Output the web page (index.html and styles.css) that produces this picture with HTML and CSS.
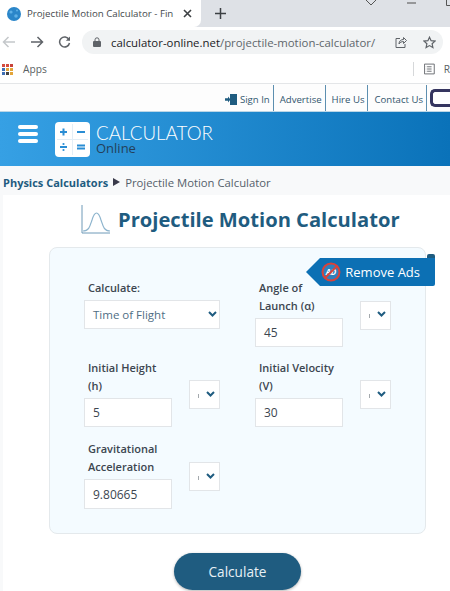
FILE: index.html
```html
<!DOCTYPE html>
<html lang="en">

<head>
    <meta charset="UTF-8">
    <meta name="viewport" content="width=device-width, initial-scale=1.0">
    <title>Projectile Motion Calculator</title>
    <link rel="stylesheet" href="styles.css">
</head>

<body>
    <!-- browser -->
    <div class="tabStrip">
        <div class="tab">
            <svg class="favicon" width="14" height="14" viewBox="0 0 14 14">
                <circle cx="7" cy="7" r="7" fill="#2b86c9" />
                <circle cx="4" cy="5" r="1.6" fill="#5fb0e6" />
                <circle cx="9" cy="9" r="1.8" fill="#5fb0e6" />
                <circle cx="10" cy="3.5" r="1" fill="#5fb0e6" />
            </svg>
            <span class="tabTitle">Projectile Motion Calculator - Fin</span>
            <svg class="tabClose" width="9" height="9" viewBox="0 0 9 9">
                <path d="M1 1l7 7M8 1l-7 7" stroke="#3c4043" stroke-width="1.6" />
            </svg>
        </div>
        <svg class="newTab" width="11" height="11" viewBox="0 0 11 11">
            <path d="M5.5 0v11M0 5.5h11" stroke="#3c4043" stroke-width="1.5" />
        </svg>
        <div class="winBtns">
            <svg width="12" height="6" viewBox="0 0 12 6">
                <path d="M1 0l5 5 5-5" fill="none" stroke="#555" stroke-width="1" />
            </svg>
            <svg width="9" height="6" viewBox="0 0 9 6">
                <path d="M0 3h9" stroke="#666" stroke-width="1.2" />
            </svg>
            <svg width="9" height="6" viewBox="0 0 9 6">
                <path d="M.5 0v5.5h8.500V0" fill="none" stroke="#555" stroke-width="1" />
            </svg>
        </div>
    </div>

    <div class="toolbar">
        <svg width="14" height="12" viewBox="0 0 14 12">
            <path d="M13 6H2M6.500 1L1.500 6l5 5" fill="none" stroke="#c4c7ca" stroke-width="1.500" />
        </svg>
        <svg width="14" height="12" viewBox="0 0 14 12">
            <path d="M1 6h11M7.500 1l5 5-5 5" fill="none" stroke="#5f6368" stroke-width="1.500" />
        </svg>
        <svg width="13" height="13" viewBox="0 0 13 13">
            <path d="M11 3.600A5 5 0 1 0 11.500 7" fill="none" stroke="#5f6368" stroke-width="1.500" />
            <path d="M12 .5v4.200H7.800z" fill="#5f6368" />
        </svg>
        <div class="omnibox">
            <svg width="8" height="10" viewBox="0 0 8 10">
                <path d="M2 4V2.800a2 2 0 0 1 4 0V4" fill="none" stroke="#5f6368" stroke-width="1" />
                <rect y="4" width="8" height="6" rx="1" fill="#5f6368" />
            </svg>
            <span class="url"><b>calculator-online.net</b>/projectile-motion-calculator/</span>
            <svg class="share" width="12" height="12" viewBox="0 0 12 12">
                <path d="M5 2.500H1v9h9V8M4 8c0-3 2-4.500 4.500-4.500V1.500L11.500 4.500 8.500 7.500V5.500C6.500 5.500 5 6.500 4 8z" fill="none" stroke="#5f6368" stroke-width="1" />
            </svg>
            <svg class="star" width="13" height="13" viewBox="0 0 13 13">
                <path d="M6.500 1.200l1.600 3.500 3.800.4-2.800 2.600.8 3.800-3.400-1.900-3.400 1.900.8-3.800L1.100 5.100l3.800-.4z" fill="none" stroke="#5f6368" stroke-width="1.200" />
            </svg>
        </div>
    </div>

    <div class="bookmarks">
        <div class="appsGrid">
            <i class="c1"></i><i class="c2"></i><i class="c3"></i>
            <i class="c4"></i><i class="c5"></i><i class="c6"></i>
            <i class="c7"></i><i class="c8"></i><i class="c9"></i>
        </div>
        <span class="apps">Apps</span>
        <div class="bmRight">
            <svg width="12" height="12" viewBox="0 0 12 12">
                <path d="M.5.500h11v11H.500zM3.500 3.500h5M3.500 6h5M3.500 8.500h5M2 3.500h.5M2 6h.5M2 8.500h.5" fill="none" stroke="#5f6368" stroke-width="1" />
            </svg>
            <span class="apps">R</span>
        </div>
    </div>

    <!-- page -->
    <div class="topLinks">
        <a href="#" class="signIn">
            <svg width="12" height="11" viewBox="0 0 12 11">
                <path d="M5 0h7v11H5zM0 4.200h3V2.500L5.500 5.500 3 8.500V6.800H0z" fill="#1f5c80" />
            </svg>
            Sign In
        </a>
        <a href="#">Advertise</a>
        <a href="#">Hire Us</a>
        <a href="#">Contact Us</a>
        <span class="themeBox"></span>
    </div>

    <header class="siteHeader">
        <div class="burger"><span></span><span></span><span></span></div>
        <svg class="logoBox" width="35" height="35" viewBox="0 0 35 35">
            <rect width="35" height="35" rx="4" fill="#fff" />
            <path d="M17.500 2v31M2 17.500h31" stroke="#e3eef6" stroke-width="1" />
            <path d="M8.500 6.500v7M5 10h7M22 10h8M5 25h7M22 23.500h8M22 26.500h8" stroke="#2a8dd4" stroke-width="2" />
            <circle cx="8.500" cy="22" r="1.100" fill="#2a8dd4" />
            <circle cx="8.500" cy="28" r="1.100" fill="#2a8dd4" />
        </svg>
        <div class="logoText">
            <div class="logoTop">CALCULATOR</div>
            <div class="logoSub">Online</div>
        </div>
    </header>

    <div class="crumbs">
        <a href="#">Physics Calculators</a>
        <span class="crumbArrow"></span>
        <span>Projectile Motion Calculator</span>
    </div>

    <main class="main">
        <div class="titleRow">
            <svg width="29" height="29" viewBox="0 0 29 29">
                <path d="M1 0v28h28" fill="none" stroke="#6f9ab8" stroke-width="1" />
                <path d="M2 26c6 0 7-5 9-11 1.500-5 3-7 4.500-7s3 2 4.500 7c2 6 3 11 9 11" fill="none" stroke="#8db4cd" stroke-width="1.200" />
            </svg>
            <h1>Projectile Motion Calculator</h1>
        </div>

        <div class="card">
            <div class="removeAds">
                <svg width="20" height="20" viewBox="0 0 20 20">
                    <circle cx="10" cy="10" r="8.500" fill="#2f80bd" stroke="#d9423a" stroke-width="2" />
                    <text x="10" y="13" class="adMark">AD</text>
                    <path d="M4 16L16 4" stroke="#d9423a" stroke-width="2" />
                </svg>
                Remove Ads
            </div>

            <div class="formGrid">
                <div class="field">
                    <div class="fieldMain">
                        <label>Calculate:</label>
                        <div class="selectBox wide">Time of Flight<svg class="chev" width="9" height="6" viewBox="0 0 9 6"><path d="M1 1l3.500 3.500L8 1" fill="none" stroke="#1f5c80" stroke-width="2" /></svg></div>
                    </div>
                </div>

                <div class="field">
                    <div class="fieldMain">
                        <label>Angle of<br>Launch (α)</label>
                        <div class="inputBox">45</div>
                    </div>
                    <div class="selectBox unit"><i></i><svg class="chev" width="9" height="6" viewBox="0 0 9 6"><path d="M1 1l3.500 3.500L8 1" fill="none" stroke="#1f5c80" stroke-width="2" /></svg></div>
                </div>

                <div class="field">
                    <div class="fieldMain">
                        <label>Initial Height<br>(h)</label>
                        <div class="inputBox">5</div>
                    </div>
                    <div class="selectBox unit"><i></i><svg class="chev" width="9" height="6" viewBox="0 0 9 6"><path d="M1 1l3.500 3.500L8 1" fill="none" stroke="#1f5c80" stroke-width="2" /></svg></div>
                </div>

                <div class="field">
                    <div class="fieldMain">
                        <label>Initial Velocity<br>(V)</label>
                        <div class="inputBox">30</div>
                    </div>
                    <div class="selectBox unit"><i></i><svg class="chev" width="9" height="6" viewBox="0 0 9 6"><path d="M1 1l3.500 3.500L8 1" fill="none" stroke="#1f5c80" stroke-width="2" /></svg></div>
                </div>

                <div class="field lastField">
                    <div class="fieldMain">
                        <label>Gravitational<br>Acceleration</label>
                        <div class="inputBox tall">9.80665</div>
                    </div>
                    <div class="selectBox unit"><i></i><svg class="chev" width="9" height="6" viewBox="0 0 9 6"><path d="M1 1l3.500 3.500L8 1" fill="none" stroke="#1f5c80" stroke-width="2" /></svg></div>
                </div>
            </div>
        </div>

        <button class="calcBtn">Calculate</button>
    </main>
</body>

</html>
```
FILE: styles.css
```css
/* reset */
* {
    box-sizing: border-box;
}

html,
body {
    margin: 0;
    padding: 0;
}

body {
    width: 450px;
    height: 591px;
    overflow: hidden;
    background: #f8f9fa;
    font-family: "Open Sans", "Noto Sans", sans-serif;
    color: #3c4650;
}

a {
    color: inherit;
    text-decoration: none;
}

/* tab strip */
.tabStrip {
    display: flex;
    align-items: center;
    height: 27px;
    background: #dee1e6;
}

.tab {
    display: flex;
    align-items: center;
    flex: none;
    width: 201px;
    height: 27px;
    padding-left: 7px;
    background: #fff;
    border-bottom-right-radius: 7px;
}

.tabTitle {
    width: 149px;
    margin-left: 6px;
    overflow: hidden;
    white-space: nowrap;
    font-size: 9.700px;
    color: #45494d;
}

.tabClose {
    margin-left: 7px;
}

.newTab {
    flex: none;
    margin-left: 14px;
}

.winBtns {
    display: flex;
    flex: none;
    align-self: flex-start;
    gap: 30px;
    margin-left: 139px;
}

/* toolbar */
.toolbar {
    display: flex;
    align-items: center;
    gap: 14px;
    height: 28px;
    padding: 2px 0 0 2px;
    background: #fff;
}

.omnibox {
    display: flex;
    align-items: center;
    flex: none;
    width: 361px;
    height: 24px;
    margin-left: -3px;
    padding-left: 11px;
    border-radius: 12px;
    background: #f1f3f4;
}

.url {
    width: 276px;
    margin-left: 10px;
    white-space: nowrap;
    font-size: 11.400px;
    color: #60666b;
}

.url b {
    font-weight: 400;
    color: #202124;
}

.share {
    margin-left: 8px;
}

.star {
    margin-left: 16px;
}

/* bookmarks */
.bookmarks {
    display: flex;
    align-items: center;
    height: 29px;
    padding-left: 2px;
    background: #fff;
    border-bottom: 1px solid #e4e6e8;
}

.appsGrid {
    display: grid;
    grid-template-columns: repeat(3, 3px);
    grid-auto-rows: 3px;
    gap: 1px;
}

.appsGrid i {
    display: block;
}

.c1 { background: #d44c3f; }
.c2 { background: #d44c3f; }
.c3 { background: #c7423a; }
.c4 { background: #3f6fb5; }
.c5 { background: #e3a53a; }
.c6 { background: #e3a53a; }
.c7 { background: #3f6fb5; }
.c8 { background: #444; }
.c9 { background: #e3a53a; }

.apps {
    margin-left: 10px;
    font-size: 10.200px;
    color: #5a5f63;
}

.bmRight {
    display: flex;
    align-items: center;
    width: 37px;
    height: 14px;
    margin-left: auto;
    padding-left: 10px;
    border-left: 1px solid #d6d8da;
}

.bmRight .apps {
    margin-left: 9px;
}

/* top links */
.topLinks {
    display: flex;
    justify-content: flex-end;
    align-items: stretch;
    height: 28px;
    padding-top: 1px;
    background: #fdfdfd;
    border-bottom: 1px solid #bcd6e6;
}

.topLinks a {
    display: flex;
    align-items: center;
    padding: 2px 3px 0 6px;
    border-right: 1px solid #5d8fb0;
    font-size: 9.600px;
    color: #32566e;
}

.topLinks .signIn {
    gap: 3px;
}

.themeBox {
    width: 20px;
    height: 18px;
    margin: 4px 0 0 3px;
    border: 3px solid #35355f;
    border-right: 0;
    border-radius: 5px 0 0 5px;
    background: #fff;
}

/* header */
.siteHeader {
    display: flex;
    align-items: center;
    height: 54px;
    padding-left: 18px;
    background: linear-gradient(90deg, #36a0e4, #0a72b9);
}

.burger {
    display: flex;
    flex-direction: column;
    align-self: flex-start;
    gap: 3px;
    width: 20px;
    margin-top: 13px;
}

.burger span {
    display: block;
    height: 4px;
    border-radius: 2px;
    background: #fff;
}

.logoBox {
    margin: 1px 0 0 17px;
}

.logoText {
    margin-left: 6px;
}

.logoTop {
    font-family: "Lato", sans-serif;
    font-size: 18.800px;
    font-weight: 300;
    line-height: 17px;
    color: #fff;
}

.logoSub {
    margin-top: 1px;
    font-size: 13px;
    line-height: 13px;
    color: #24405a;
}

/* breadcrumb */
.crumbs {
    display: flex;
    align-items: center;
    height: 29px;
    padding: 3px 0 0 3px;
    font-size: 11.300px;
    color: #55606a;
}

.crumbs a {
    font-size: 11px;
    font-weight: 700;
    color: #1f5c80;
}

.crumbArrow {
    width: 0;
    height: 0;
    margin: 0 5px;
    border-left: 7px solid #3a3a4a;
    border-top: 4px solid transparent;
    border-bottom: 4px solid transparent;
}

/* main */
.main {
    display: flex;
    flex-direction: column;
    height: 396px;
    margin-left: 3px;
    background: #fff;
}

.titleRow {
    display: flex;
    align-items: center;
    height: 52px;
    padding: 0 0 3px 78px;
}

.titleRow h1 {
    margin: -2px 0 0 8px;
    font-size: 20.150px;
    font-weight: 700;
    color: #1f5c80;
}

.card {
    position: relative;
    width: 377px;
    height: 287px;
    margin-left: 46px;
    padding: 31px 0 0 34px;
    border: 1px solid #e4e9ec;
    border-radius: 8px;
    background: #f4fbff;
}

.removeAds {
    position: absolute;
    top: 10px;
    right: -10px;
    display: flex;
    align-items: center;
    gap: 4px;
    height: 28px;
    padding: 0 15px 0 1px;
    border-radius: 0 0 2px 0;
    background: #0c70b4;
    font-size: 13px;
    color: #fff;
}

/* ribbon tip */
.removeAds::before {
    content: "";
    position: absolute;
    top: 0;
    left: -14px;
    border-right: 14px solid #0c70b4;
    border-top: 14px solid transparent;
    border-bottom: 14px solid transparent;
}

/* ribbon fold */
.removeAds::after {
    content: "";
    position: absolute;
    top: -4px;
    right: 0;
    width: 8px;
    height: 4px;
    border-radius: 2px 2px 0 0;
    background: #1f5c80;
}

.adMark {
    font-family: "Open Sans", sans-serif;
    font-size: 8px;
    font-style: italic;
    font-weight: 700;
    text-anchor: middle;
    fill: #fff;
}

.formGrid {
    display: grid;
    grid-template-columns: 136px 136px;
    grid-template-rows: 68px 69px 71px;
    column-gap: 35px;
    row-gap: 11px;
}

.field {
    display: flex;
    align-items: center;
    justify-content: space-between;
}

.lastField {
    margin-top: 2px;
}

.fieldMain {
    width: 88px;
}

.field:first-child {
    align-items: flex-start;
}

.field:first-child .fieldMain {
    width: 136px;
}

label {
    display: block;
    margin-bottom: 3px;
    padding-left: 4px;
    font-size: 11px;
    font-weight: 600;
    line-height: 18px;
    color: #3c4650;
}

.inputBox {
    display: flex;
    align-items: center;
    height: 29px;
    padding-left: 8px;
    border: 1px solid #e2e5e8;
    background: #fff;
    font-size: 12px;
    color: #3c4650;
}

.inputBox.tall {
    height: 30px;
}

.selectBox {
    display: flex;
    align-items: center;
    height: 29px;
    background: #fff;
    border: 1px solid #e2e5e8;
    font-size: 11.500px;
    color: #4f6e84;
}

.selectBox.wide {
    justify-content: space-between;
    padding: 0 2px 0 8px;
}

.selectBox.unit {
    justify-content: space-between;
    width: 31px;
    margin-top: 4px;
    padding: 0 4px 0 8px;
}

.selectBox i {
    width: 1px;
    height: 4px;
    margin-top: 2px;
    background: #a4a9ad;
}

.chev {
    margin-top: -2px;
}

/* button */
.calcBtn {
    width: 127px;
    height: 37px;
    margin: 19px 0 0 171px;
    border: 0;
    border-radius: 19px;
    background: #1f5c80;
    box-shadow: 0 1px 3px rgba(0, 0, 0, .3);
    font-family: inherit;
    font-size: 13.600px;
    color: #e8f1f6;
}
```
